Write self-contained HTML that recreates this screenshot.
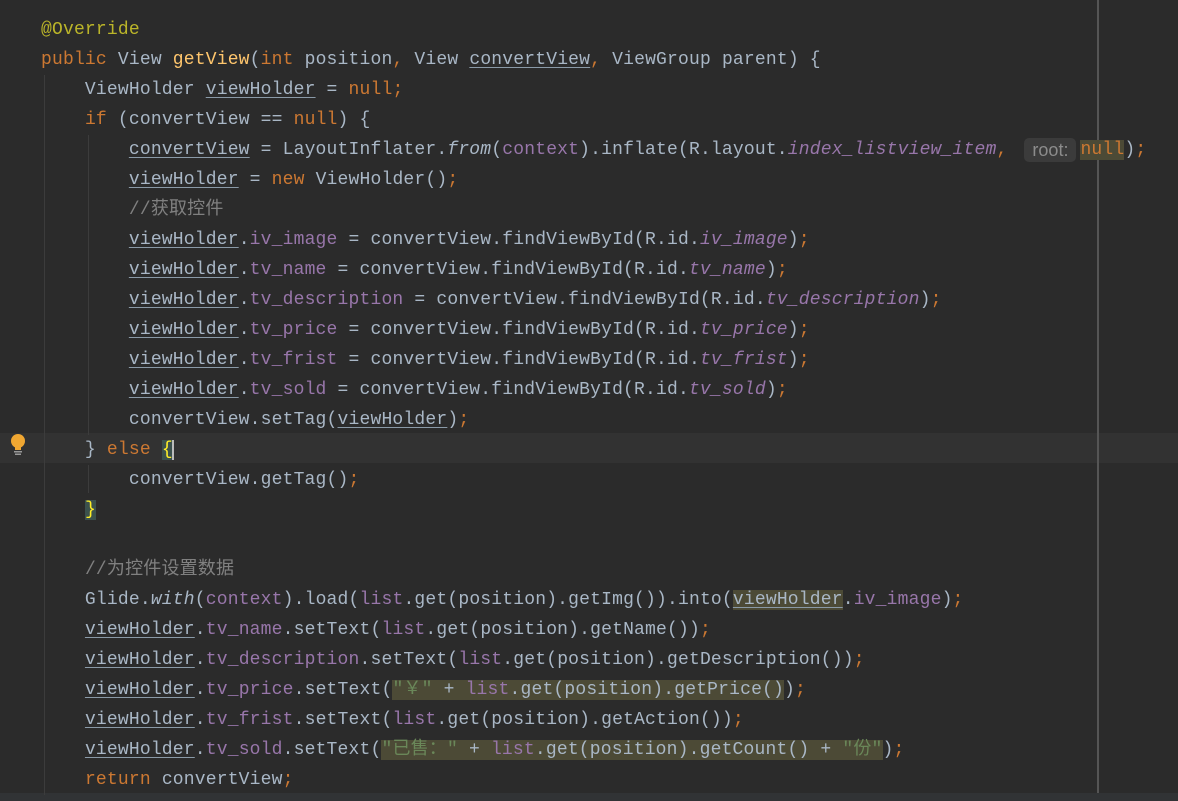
<!DOCTYPE html>
<html><head><meta charset="utf-8"><style>
body{margin:0;width:1178px;height:801px;background:#2b2b2b;overflow:hidden;position:relative}
.code{position:absolute;left:41px;top:15px;font-family:"Liberation Mono","Noto Sans CJK SC",monospace;font-size:18px;letter-spacing:0.18px;color:#a9b7c6}
.code div{height:30px;line-height:30px;white-space:pre;overflow:visible}
.k{color:#cc7832}.f{color:#9876aa}.fi{color:#9876aa;font-style:italic}.m{color:#ffc66d}.a{color:#bbb529}.c{color:#808080}.s{color:#6a8759}
.u{text-decoration:underline;text-decoration-color:#8a9aa8;text-underline-offset:3px}
.i{font-style:italic}
.h{background:#4c4a36}
.b{color:#ffef28;background:#3b514d}
.inl{display:inline-block;vertical-align:top;margin-top:3px;height:24px;line-height:24px;font-family:"Liberation Sans",sans-serif;font-size:18px;color:#8c8c8c;background:#3b3b3b;border-radius:5px;padding:0 8px;letter-spacing:0;margin-left:6px;margin-right:4px}
.g{position:absolute;width:1px;background:#3c3c3c}
</style></head><body>
<div style="position:absolute;left:0;top:433px;width:1178px;height:30px;background:#323232"></div>
<div style="position:absolute;left:1097px;top:0;width:2px;height:801px;background:#555"></div>
<div style="position:absolute;left:0;top:793px;width:1178px;height:8px;background:#313335"></div>
<div class="g" style="left:44px;top:75px;height:720px"></div>
<div class="g" style="left:88px;top:135px;height:300px"></div>
<div class="g" style="left:88px;top:465px;height:28px"></div>
<svg style="position:absolute;left:9px;top:433px" width="18" height="24" viewBox="0 0 18 24"><circle cx="9" cy="8" r="7" fill="#f0a732"/><rect x="6" y="13" width="6" height="4" fill="#f0a732"/><rect x="5" y="18" width="8" height="1.5" fill="#999"/><rect x="6" y="20.5" width="6" height="1.5" fill="#999"/></svg>
<div class="code">
<div><span class="a">@Override</span></div>
<div><span class="k">public </span>View <span class="m">getView</span>(<span class="k">int </span>position<span class="k">, </span>View <span class="u">convertView</span><span class="k">, </span>ViewGroup parent) {</div>
<div>    ViewHolder <span class="u">viewHolder</span> = <span class="k">null;</span></div>
<div>    <span class="k">if </span>(convertView == <span class="k">null</span>) {</div>
<div>        <span class="u">convertView</span> = LayoutInflater.<span class="i">from</span>(<span class="f">context</span>).inflate(R.layout.<span class="fi">index_listview_item</span><span class="k">, </span><span class="inl">root:</span><span class="k h">null</span>)<span class="k">;</span></div>
<div>        <span class="u">viewHolder</span> = <span class="k">new </span>ViewHolder()<span class="k">;</span></div>
<div>        <span class="c">//获取控件</span></div>
<div>        <span class="u">viewHolder</span>.<span class="f">iv_image</span> = convertView.findViewById(R.id.<span class="fi">iv_image</span>)<span class="k">;</span></div>
<div>        <span class="u">viewHolder</span>.<span class="f">tv_name</span> = convertView.findViewById(R.id.<span class="fi">tv_name</span>)<span class="k">;</span></div>
<div>        <span class="u">viewHolder</span>.<span class="f">tv_description</span> = convertView.findViewById(R.id.<span class="fi">tv_description</span>)<span class="k">;</span></div>
<div>        <span class="u">viewHolder</span>.<span class="f">tv_price</span> = convertView.findViewById(R.id.<span class="fi">tv_price</span>)<span class="k">;</span></div>
<div>        <span class="u">viewHolder</span>.<span class="f">tv_frist</span> = convertView.findViewById(R.id.<span class="fi">tv_frist</span>)<span class="k">;</span></div>
<div>        <span class="u">viewHolder</span>.<span class="f">tv_sold</span> = convertView.findViewById(R.id.<span class="fi">tv_sold</span>)<span class="k">;</span></div>
<div>        convertView.setTag(<span class="u">viewHolder</span>)<span class="k">;</span></div>
<div>    } <span class="k">else </span><span class="b">{</span><span style="border-left:2px solid #bbb;margin-left:-1px"></span></div>
<div>        convertView.getTag()<span class="k">;</span></div>
<div>    <span class="b">}</span></div>
<div> </div>
<div>    <span class="c">//为控件设置数据</span></div>
<div>    Glide.<span class="i">with</span>(<span class="f">context</span>).load(<span class="f">list</span>.get(position).getImg()).into(<span class="u h">viewHolder</span>.<span class="f">iv_image</span>)<span class="k">;</span></div>
<div>    <span class="u">viewHolder</span>.<span class="f">tv_name</span>.setText(<span class="f">list</span>.get(position).getName())<span class="k">;</span></div>
<div>    <span class="u">viewHolder</span>.<span class="f">tv_description</span>.setText(<span class="f">list</span>.get(position).getDescription())<span class="k">;</span></div>
<div>    <span class="u">viewHolder</span>.<span class="f">tv_price</span>.setText(<span class="h"><span class="s">"￥"</span> + <span class="f">list</span>.get(position).getPrice()</span>)<span class="k">;</span></div>
<div>    <span class="u">viewHolder</span>.<span class="f">tv_frist</span>.setText(<span class="f">list</span>.get(position).getAction())<span class="k">;</span></div>
<div>    <span class="u">viewHolder</span>.<span class="f">tv_sold</span>.setText(<span class="h"><span class="s">"已售："</span> + <span class="f">list</span>.get(position).getCount() + <span class="s">"份"</span></span>)<span class="k">;</span></div>
<div>    <span class="k">return </span>convertView<span class="k">;</span></div>
</div>
</body></html>
